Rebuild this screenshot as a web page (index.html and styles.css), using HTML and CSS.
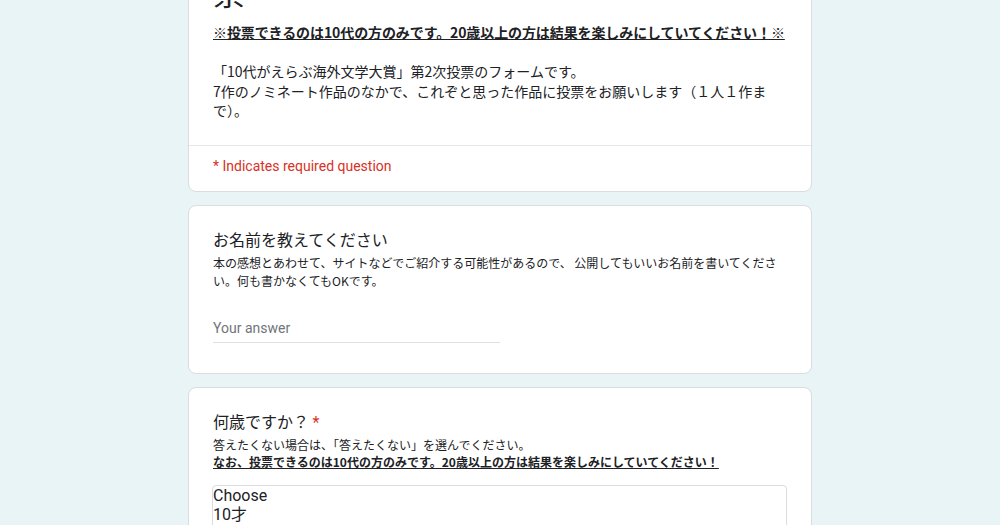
FILE: index.html
```html
<!DOCTYPE html>
<html lang="ja">
<head>
<meta charset="utf-8">
<title>10代がえらぶ海外文学大賞 第2次投票</title>
<link rel="stylesheet" href="styles.css">
</head>
<body>
<main class="page">
  <section class="card head-card">
    <div class="head-body">
      <h1 class="form-title">「10代がえらぶ海外文学大賞」第2次投票</h1>
      <div class="form-desc">
        <p class="notice notice-line">※投票できるのは10代の方のみです。20歳以上の方は結果を楽しみにしていてください！※</p>
        <p class="blank">&nbsp;</p>
        <p>「10代がえらぶ海外文学大賞」第2次投票のフォームです。<br>7作のノミネート作品のなかで、これぞと思った作品に投票をお願いします（１人１作まで）。</p>
      </div>
    </div>
    <div class="required-note">* Indicates required question</div>
  </section>

  <section class="card question">
    <div class="q-title">お名前を教えてください</div>
    <div class="q-desc">本の感想とあわせて、サイトなどでご紹介する可能性があるので、 公開してもいいお名前を書いてください。何も書かなくてもOKです。</div>
    <div class="text-input">Your answer</div>
  </section>

  <section class="card question">
    <div class="q-title">何歳ですか？ <span class="req">*</span></div>
    <div class="q-desc">答えたくない場合は、「答えたくない」を選んでください。<br><span class="notice">なお、投票できるのは10代の方のみです。20歳以上の方は結果を楽しみにしていてください！</span></div>
    <div class="listbox">
      <div class="opt">Choose</div>
      <div class="opt">10才</div>
      <div class="opt">11才</div>
      <div class="opt">12才</div>
      <div class="opt">13才</div>
    </div>
  </section>
</main>
</body>
</html>
```

FILE: styles.css
```css
html, body {
  margin: 0;
  padding: 0;
}

body {
  background: #e8f4f6;
  color: #202124;
  font-family: "Noto Sans CJK JP", Roboto, sans-serif;
  overflow: hidden;
  height: 525px;
}

.page {
  width: 624px;
  margin: -94px auto 0;
  display: flex;
  flex-direction: column;
  gap: 13px;
}

.card {
  background: #ffffff;
  border: 1px solid #dadce0;
  border-radius: 8px;
}

.head-body {
  padding: 24px 24px 24px;
  border-bottom: 1px solid #e6e7ea;
}

.form-title {
  margin: 0 0 12px;
  font-size: 32px;
  line-height: 40px;
  font-weight: 400;
  color: #202124;
}

.form-desc {
  font-size: 14px;
  line-height: 19.5px;
  color: #202124;
}

.form-desc p {
  margin: 0;
}

.notice {
  font-weight: 700;
  text-decoration: underline;
}

.notice-line {
  white-space: nowrap;
  letter-spacing: -0.1px;
}

.required-note {
  padding: 10px 24px 15px;
  font-family: Roboto, sans-serif;
  font-size: 14px;
  line-height: 20px;
  color: #d93025;
}

.question {
  padding: 21px 24px 30px;
}

.q-title {
  font-size: 16px;
  line-height: 24px;
  color: #202124;
}

.req {
  color: #d93025;
  font-family: Roboto, sans-serif;
}

.q-desc {
  margin-top: 3px;
  font-size: 12px;
  line-height: 18px;
  color: #202124;
}

.text-input {
  margin-top: 24px;
  width: 50%;
  padding: 4px 0 4px;
  border-bottom: 1px solid #e0e0e0;
  font-family: Roboto, sans-serif;
  font-size: 14px;
  line-height: 20px;
  color: #70757a;
}

.question + .question .q-desc {
  margin-top: 1px;
  line-height: 17px;
}

.listbox {
  margin-top: 15px;
  margin-left: -1px;
  border: 1px solid #dadce0;
  border-radius: 4px;
  font-family: Roboto, "Noto Sans CJK JP", sans-serif;
  font-size: 16px;
  line-height: 19px;
  color: #202124;
}

.opt {
  padding: 0;
}
```
